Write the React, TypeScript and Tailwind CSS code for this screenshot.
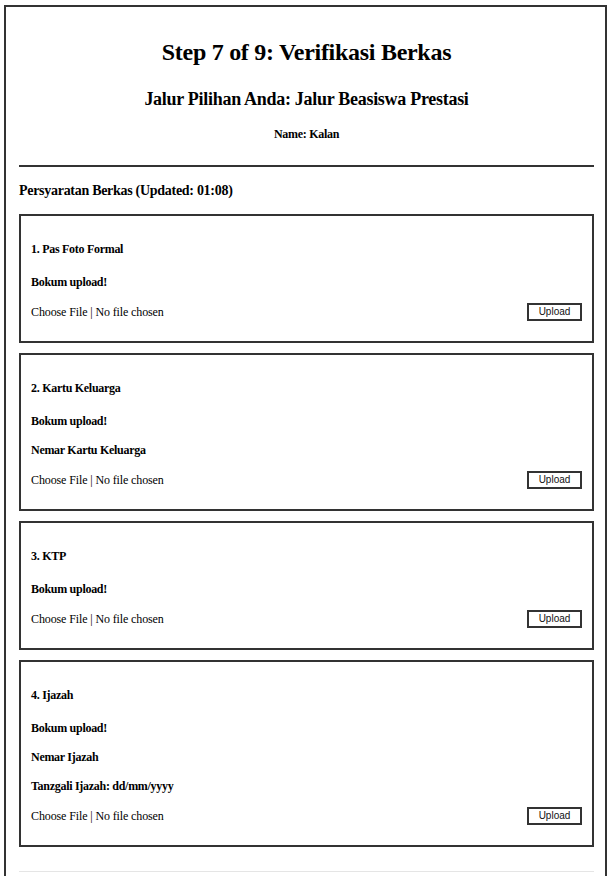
const docs = [
  { no: 1, title: 'Pas Foto Formal', extra: [] as string[] },
  { no: 2, title: 'Kartu Keluarga', extra: ['Nemar Kartu Keluarga'] },
  { no: 3, title: 'KTP', extra: [] as string[] },
  { no: 4, title: 'Ijazah', extra: ['Nemar Ijazah', 'Tanzgali Ijazah: dd/mm/yyyy'] },
];

function DocCard({ no, title, extra }: { no: number; title: string; extra: string[] }) {
  return (
    <div className="border-2 border-[#333] px-[10px] pt-[26px] pb-[20px]">
      <h4 className="text-[12px] leading-[14px] font-bold">
        {no}. {title}
      </h4>
      <p className="mt-[19px] text-[12px] leading-[14px] font-bold">Bokum upload!</p>
      {extra.map((e) => (
        <p key={e} className="mt-[15px] text-[12px] leading-[14px] font-bold">
          {e}
        </p>
      ))}
      <div className="mt-[14px] flex items-center justify-between">
        <span className="text-[12px] leading-[14px] tracking-[-0.01em] text-black">Choose File | No file chosen</span>
        <button className="w-[55px] h-[18px] border-2 border-[#333] bg-white text-[10px] leading-none tracking-normal font-['Liberation_Sans',Arial,sans-serif] text-[#111]">
          Upload
        </button>
      </div>
    </div>
  );
}

export default function App() {
  return (
    <div className="min-h-[876px] bg-white font-['Liberation_Serif','Times_New_Roman',serif] tracking-[-0.018em] text-black">
      <div className="mx-[4px] mt-[5px] border-2 border-b-0 border-[#333] pl-[13px] pr-[11px] pt-[31px] pb-[8px]">
        <h1 className="text-center text-[24px] leading-[28px] font-bold">Step 7 of 9: Verifikasi Berkas</h1>
        <h2 className="mt-[23px] text-center text-[18px] leading-[21px] font-bold">
          Jalur Pilihan Anda: Jalur Beasiswa Prestasi
        </h2>
        <p className="mt-[17px] text-center text-[12px] leading-[14px] font-bold">Name: Kalan</p>
        <hr className="mt-[24px] border-0 h-[2px] bg-[#333]" />
        <h3 className="mt-[16px] text-[14px] leading-[16px] font-bold">Persyaratan Berkas (Updated: 01:08)</h3>
        <div className="mt-[15px] flex flex-col gap-[10px]">
          {docs.map((d) => (
            <DocCard key={d.no} {...d} />
          ))}
        </div>
        <div className="mt-[24px] h-px bg-[#e5e5e5]" />
      </div>
    </div>
  );
}
